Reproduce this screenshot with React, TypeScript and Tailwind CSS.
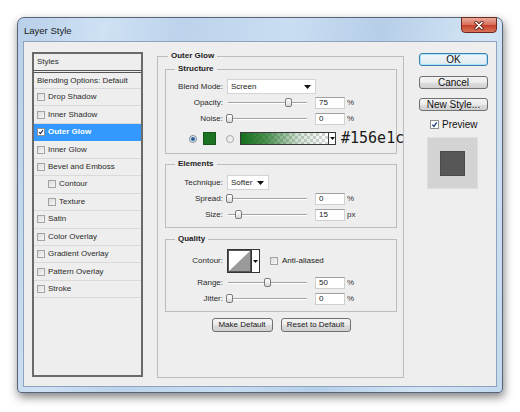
import React from "react";

const Arrow = ({ small = false }: { small?: boolean }) =>
  small ? (
    <svg width="5" height="3" viewBox="0 0 5 3" className="shrink-0">
      <path d="M0 0H5L2.5 3Z" fill="#111" />
    </svg>
  ) : (
    <svg width="7" height="4" viewBox="0 0 7 4" className="shrink-0">
      <path d="M0 0H7L3.5 4Z" fill="#111" />
    </svg>
  );

const Tick = ({ color = "#1c2f55" }: { color?: string }) => (
  <svg width="100%" height="100%" viewBox="0 0 8 8">
    <path d="M1.5 4.2 L3.3 6.2 L6.6 1.6" fill="none" stroke={color} strokeWidth="1.5" />
  </svg>
);

const SmallCheck = ({ checked = false }: { checked?: boolean }) =>
  checked ? (
    <div className="w-[8px] h-[8px] shrink-0 border border-[#8e8f8f] bg-white">
      <Tick />
    </div>
  ) : (
    <div className="w-[8px] h-[8px] shrink-0 border border-[#a3a3a3] bg-[linear-gradient(135deg,#dcdcdc,#f7f7f7)]" />
  );

const Radio = ({ on = false }: { on?: boolean }) =>
  on ? (
    <div className="w-[8px] h-[8px] shrink-0 rounded-full border border-[#7d8a99] bg-[#e7eef6] flex items-center justify-center">
      <div className="w-[4px] h-[4px] rounded-full bg-[#2b5f98]" />
    </div>
  ) : (
    <div className="w-[8px] h-[8px] shrink-0 rounded-full border border-[#a8a8a8] bg-[linear-gradient(135deg,#e2e2e2,#fbfbfb)]" />
  );

const Label = ({ children }: { children: React.ReactNode }) => (
  <span className="w-[57px] shrink-0 text-right text-[#2a2a2a]">{children}</span>
);

const Slider = ({ pos }: { pos: number }) => (
  <div className="relative ml-[3px] w-[83px] h-[10px] shrink-0">
    <div className="absolute left-[2px] right-[2px] top-[4px] h-[2px] border-t border-t-[#a5a5a5] border-b border-b-white" />
    <div
      className="absolute top-0 w-[7px] h-[9px] rounded-[2px] border border-[#7c7c7c] bg-[linear-gradient(#ffffff,#d8d8d8)]"
      style={{ left: pos }}
    />
  </div>
);

const SliderRow = ({
  label,
  pos,
  value,
  unit,
  cls = "",
}: {
  label: string;
  pos: number;
  value: string;
  unit: string;
  cls?: string;
}) => (
  <div className={`h-[16px] flex items-center ${cls}`}>
    <Label>{label}</Label>
    <Slider pos={pos} />
    <div className="ml-[6px] w-[30px] h-[12px] shrink-0 bg-white border border-[#d0d0d0] border-t-[#a0a0a0] pl-[3px] flex items-center">
      {value}
    </div>
    <span className="ml-[2px] text-[#333]">{unit}</span>
  </div>
);

const Select = ({ text, wide }: { text: string; wide: boolean }) => (
  <div
    className={`ml-[4px] h-[15px] shrink-0 bg-white border border-[#d4d4d4] flex items-center justify-between pl-[3px] pr-[4px] ${
      wide ? "w-[89px]" : "w-[42px]"
    }`}
  >
    <span>{text}</span>
    <Arrow />
  </div>
);

const Btn = ({ children, wide }: { children: React.ReactNode; wide: boolean }) => (
  <div
    className={`h-[14px] rounded-[3px] border border-[#707070] bg-[linear-gradient(#f4f4f4,#ebebeb_50%,#dddddd_51%,#d0d0d0)] flex items-center justify-center text-[8px] leading-[10px] text-[#1a1a1a] ${
      wide ? "w-[70px]" : "w-[61px]"
    }`}
  >
    {children}
  </div>
);

const SideBtn = ({ children, ok = false, cls = "" }: { children: React.ReactNode; ok?: boolean; cls?: string }) => (
  <div
    className={`w-[69px] h-[13px] rounded-[3px] flex items-center justify-center text-[10px] leading-[11px] text-[#111] ${
      ok
        ? "border border-[#3c7fb1] shadow-[inset_0_0_0_1px_#a6e3fb] bg-[linear-gradient(#f2f8fb,#dde9f1)]"
        : "border border-[#707070] bg-[linear-gradient(#f4f4f4,#ebebeb_50%,#dddddd_51%,#d0d0d0)]"
    } ${cls}`}
  >
    {children}
  </div>
);

const items: { name: string; indent?: boolean; sel?: boolean }[] = [
  { name: "Drop Shadow" },
  { name: "Inner Shadow" },
  { name: "Outer Glow", sel: true },
  { name: "Inner Glow" },
  { name: "Bevel and Emboss" },
  { name: "Contour", indent: true },
  { name: "Texture", indent: true },
  { name: "Satin" },
  { name: "Color Overlay" },
  { name: "Gradient Overlay" },
  { name: "Pattern Overlay" },
  { name: "Stroke" },
];

const Sidebar = () => (
  <div className="mt-[10px] w-[111px] h-[325px] shrink-0 border-2 border-[#6a6a6a] bg-[#eeeeee] flex flex-col text-[8px] leading-[10px] text-[#2a2a2a]">
    <div className="h-[19px] shrink-0 border-b-[3px] border-double border-[#555] flex items-center pl-[3px]">Styles</div>
    <div className="h-[16px] shrink-0 border-b border-[#d8d8d8] flex items-center pl-[3px]">Blending Options: Default</div>
    {items.map((it) => (
      <div
        key={it.name}
        className={`h-[17.45px] shrink-0 border-b flex items-center ${it.indent ? "pl-[14px]" : "pl-[3px]"} ${
          it.sel ? "bg-[#3399ff] border-[#3399ff] text-white font-bold" : "border-[#dadada]"
        }`}
      >
        <SmallCheck checked={!!it.sel} />
        <span className="ml-[3px]">{it.name}</span>
      </div>
    ))}
  </div>
);

const Middle = () => (
  <fieldset className="ml-[14px] mt-[9px] w-[247px] h-[327px] shrink-0 border border-[#bdbdbd] p-0 min-w-0 text-[8px] leading-[10px] text-[#222]">
    <legend className="ml-[10px] px-[3px] font-bold">Outer Glow</legend>
    <div className="pl-[7px] pr-[6px] flex flex-col">
      {/* Structure */}
      <fieldset className="mt-[3px] border border-[#bdbdbd] p-0 pb-[7px] min-w-0">
        <legend className="ml-[9px] px-[3px] font-bold">Structure</legend>
        <div className="mt-[5px] h-[15px] flex items-center">
          <Label>Blend Mode:</Label>
          <Select text="Screen" wide />
        </div>
        <SliderRow label="Opacity:" pos={59} value="75" unit="%" cls="mt-[1px]" />
        <SliderRow label="Noise:" pos={0} value="0" unit="%" />
        <div className="mt-[4px] h-[15px] flex items-center">
          <div className="ml-[23px] shrink-0">
            <Radio on />
          </div>
          <div className="ml-[6px] w-[13px] h-[13px] shrink-0 bg-[#1b7322] border border-[#14561a]" />
          <div className="ml-[10px] shrink-0">
            <Radio />
          </div>
          <div className="ml-[6px] w-[96px] h-[13px] shrink-0 border border-[#3a3a3a] flex">
            <div className="flex-1 bg-[repeating-conic-gradient(#d6d6d6_0_25%,#ffffff_0_50%)] bg-[length:6px_6px]">
              <div className="h-full bg-[linear-gradient(to_right,#156e1c,rgba(21,110,28,0.75)_30%,rgba(21,110,28,0.2)_65%,rgba(21,110,28,0))]" />
            </div>
            <div className="w-[7px] border-l border-[#3a3a3a] bg-white flex items-center justify-center">
              <Arrow small />
            </div>
          </div>
          <span className="ml-[5px] shrink-0 whitespace-nowrap font-['DejaVu_Sans_Mono',monospace] text-[15px] leading-[15px] text-[#1a1a1a]">
            #156e1c
          </span>
        </div>
      </fieldset>

      {/* Elements */}
      <fieldset className="mt-[5px] border border-[#bdbdbd] p-0 pb-[4px] min-w-0">
        <legend className="ml-[9px] px-[3px] font-bold">Elements</legend>
        <div className="mt-[6px] h-[15px] flex items-center">
          <Label>Technique:</Label>
          <Select text="Softer" wide={false} />
        </div>
        <SliderRow label="Spread:" pos={0} value="0" unit="%" cls="mt-[1px]" />
        <SliderRow label="Size:" pos={9} value="15" unit="px" />
      </fieldset>

      {/* Quality */}
      <fieldset className="mt-[6px] border border-[#bdbdbd] p-0 pb-[4px] min-w-0">
        <legend className="ml-[9px] px-[3px] font-bold">Quality</legend>
        <div className="mt-[5px] h-[24px] flex items-center">
          <Label>Contour:</Label>
          <div className="ml-[4px] w-[33px] h-[24px] shrink-0 border border-[#333] flex bg-white">
            <div className="flex-1 border border-[#555]">
              <svg width="100%" height="100%" viewBox="0 0 20 20" preserveAspectRatio="none">
                <path d="M0 20 L20 0 L20 20 Z" fill="#9a9a9a" />
              </svg>
            </div>
            <div className="w-[8px] border-l border-[#333] flex items-center justify-center">
              <Arrow small />
            </div>
          </div>
          <div className="ml-[10px]">
            <SmallCheck />
          </div>
          <span className="ml-[4px]">Anti-aliased</span>
        </div>
        <SliderRow label="Range:" pos={38} value="50" unit="%" cls="mt-[2px]" />
        <SliderRow label="Jitter:" pos={0} value="0" unit="%" />
      </fieldset>

      <div className="mt-[6px] flex justify-center gap-[8px]">
        <Btn wide={false}>Make Default</Btn>
        <Btn wide>Reset to Default</Btn>
      </div>
    </div>
  </fieldset>
);

const Right = () => (
  <div className="ml-[15px] mt-[11px] w-[69px] shrink-0 flex flex-col">
    <SideBtn ok>OK</SideBtn>
    <SideBtn cls="mt-[10px]">Cancel</SideBtn>
    <SideBtn cls="mt-[9px]">New Style...</SideBtn>
    <div className="mt-[8px] ml-[11px] flex items-center">
      <div className="w-[9px] h-[9px] border border-[#8e8f8f] bg-white">
        <Tick color="#1d3f7a" />
      </div>
      <span className="ml-[3px] text-[10px] leading-[11px] text-[#111]">Preview</span>
    </div>
    <div className="mt-[7px] ml-[8px] w-[51px] h-[52px] bg-[#d3d3d3] border border-[#dedede] flex items-center justify-center">
      <div className="w-[25px] h-[25px] bg-[#575757] border border-[#4a4a4a]" />
    </div>
  </div>
);

export default function App() {
  return (
    <div className="w-[520px] h-[412px] bg-white pt-[17px] pl-[17px] overflow-hidden font-['Liberation_Sans',Arial,sans-serif]">
      <div className="w-[486px] h-[376px] flex flex-col rounded-t-[7px] rounded-b-[4px] border border-[#56657a] bg-[linear-gradient(100deg,#b8d0ea_0%,#cfe1f4_16%,#bcd3eb_30%,#cadef2_50%,#b6cee8_66%,#d3e5f5_85%,#c3d9ef_100%)] shadow-[1px_4px_10px_rgba(0,0,0,0.5)] px-[5px] pb-[5px]">
        <div className="h-[23px] shrink-0 flex items-start justify-between">
          <span className="mt-[7px] ml-[1px] text-[9.5px] leading-[11px] text-[#1a1a1a]">Layer Style</span>
          <div className="-mt-px w-[36px] h-[16px] rounded-b-[4px] border border-[#6b2a20] bg-[linear-gradient(#eba99b,#d86f5b_48%,#c5412b_52%,#d9745a)] flex items-center justify-center">
            <svg width="10" height="9" viewBox="0 0 10 9">
              <path d="M2 1.5 L8 7.5 M8 1.5 L2 7.5" stroke="#5a1c12" strokeWidth="3.2" strokeLinecap="round" />
              <path d="M2 1.5 L8 7.5 M8 1.5 L2 7.5" stroke="#ffffff" strokeWidth="1.7" strokeLinecap="round" />
            </svg>
          </div>
        </div>
        <div className="h-[346px] shrink-0 border border-[#8ea4bc] bg-[#eeeeee] flex items-start pl-[8px]">
          <Sidebar />
          <Middle />
          <Right />
        </div>
      </div>
    </div>
  );
}
